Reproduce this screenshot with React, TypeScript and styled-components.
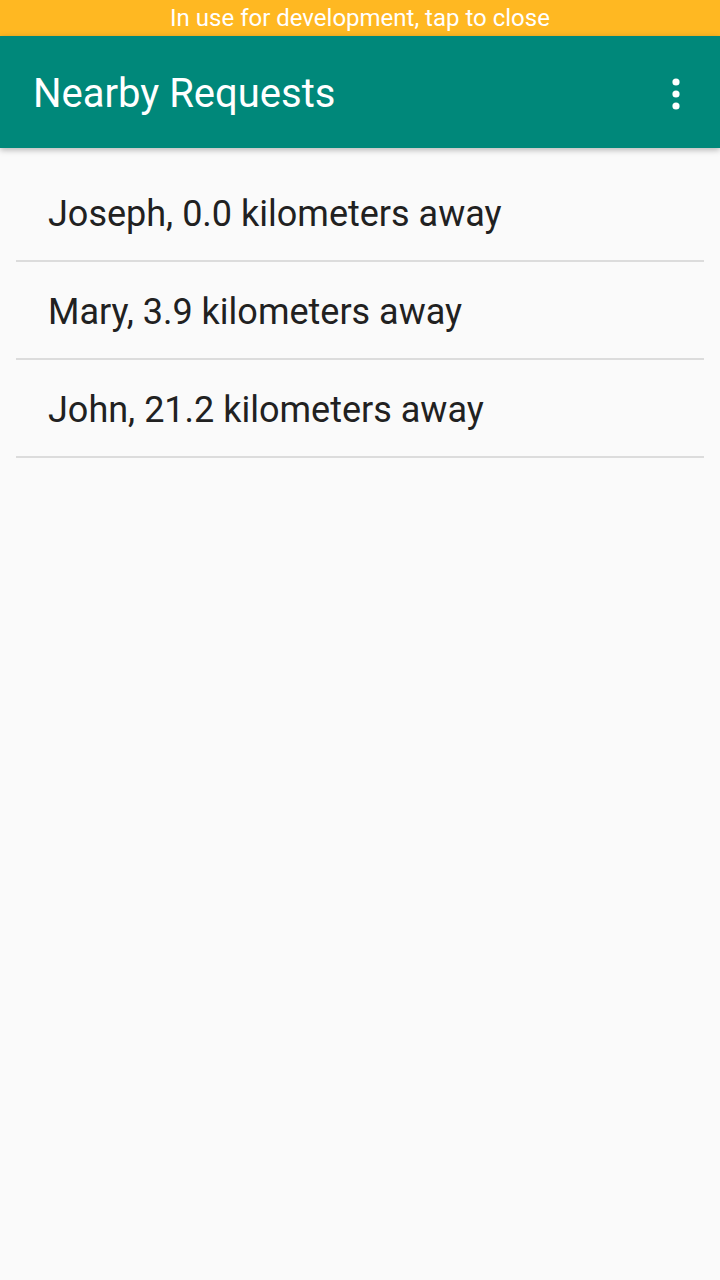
import React from "react";
import styled, { createGlobalStyle } from "styled-components";

const Global = createGlobalStyle`
  html, body { margin: 0; padding: 0; background: #fafafa; }
  body { font-family: Roboto, "Noto Sans", sans-serif; }
`;

const Screen = styled.div`
  width: 720px;
  min-height: 1280px;
  background: #fafafa;
  display: flex;
  flex-direction: column;
`;

const DevBanner = styled.div`
  height: 36px;
  background: #ffb822;
  color: #ffffff;
  font-size: 24px;
  display: flex;
  align-items: center;
  justify-content: center;
`;

const Toolbar = styled.header`
  height: 112px;
  box-sizing: border-box;
  padding: 3px 24px 0 33px;
  background: #00887a;
  display: flex;
  align-items: center;
  justify-content: space-between;
  box-shadow: 0 2px 6px rgba(0, 0, 0, 0.28);
  position: relative;
  z-index: 1;
`;

const Title = styled.h1`
  margin: 0;
  font-size: 40px;
  font-weight: 400;
  color: #ffffff;
`;

const MenuButton = styled.button`
  border: 0;
  background: transparent;
  padding: 0;
  width: 40px;
  height: 48px;
  display: flex;
  align-items: center;
  justify-content: center;
`;

const List = styled.ul`
  list-style: none;
  margin: 0;
  padding: 16px 16px 0;
`;

const Row = styled.li`
  height: 96px;
  box-sizing: border-box;
  padding: 4px 0 0 32px;
  display: flex;
  align-items: center;
  font-size: 36px;
  color: #212121;
  border-bottom: 2px solid #dcdcdc;
  height: 98px;
`;

const requests = [
  { name: "Joseph", km: "0.0" },
  { name: "Mary", km: "3.9" },
  { name: "John", km: "21.2" },
];

export default function App() {
  return (
    <Screen>
      <Global />
      <DevBanner>In use for development, tap to close</DevBanner>
      <Toolbar>
        <Title>Nearby Requests</Title>
        <MenuButton aria-label="More options">
          <svg width="8" height="32" viewBox="0 0 8 32">
            <circle cx="4" cy="4" r="3.6" fill="#fff" />
            <circle cx="4" cy="16" r="3.6" fill="#fff" />
            <circle cx="4" cy="28" r="3.6" fill="#fff" />
          </svg>
        </MenuButton>
      </Toolbar>
      <List>
        {requests.map((r) => (
          <Row key={r.name}>
            {r.name}, {r.km} kilometers away
          </Row>
        ))}
      </List>
    </Screen>
  );
}
